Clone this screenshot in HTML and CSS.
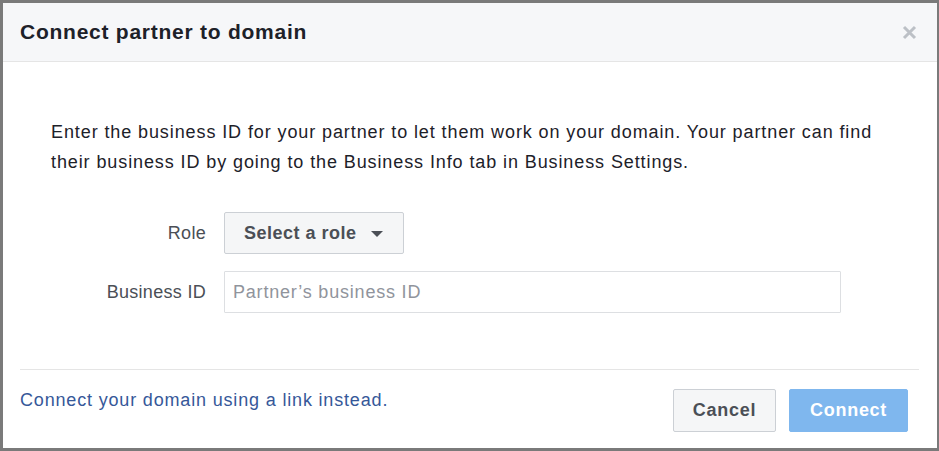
FILE: index.html
```html
<!DOCTYPE html>
<html lang="en">
<head>
<meta charset="utf-8">
<title>Connect partner to domain</title>
<link rel="stylesheet" href="styles.css">
</head>
<body>
<div class="dialog">
  <header class="dlg-header">
    <h1 class="title">Connect partner to domain</h1>
    <button class="close" type="button" aria-label="Close">
      <svg width="15" height="15" viewBox="0 0 15 15"><path d="M2 2 L13 13 M13 2 L2 13" stroke="#bcc0c6" stroke-width="3" stroke-linecap="butt" fill="none"/></svg>
    </button>
  </header>
  <div class="dlg-body">
    <p class="intro">Enter the business ID for your partner to let them work on your domain. Your partner can find their business ID by going to the Business Info tab in Business Settings.</p>
    <div class="form">
      <label class="label">Role</label>
      <button class="select" type="button"><span>Select a role</span><svg class="caret" width="12" height="6" viewBox="0 0 12 6"><path d="M0 0 H12 L6 6 Z" fill="#4b4f56"/></svg></button>
      <label class="label">Business ID</label>
      <input class="input" type="text" placeholder="Partner’s business ID">
    </div>
  </div>
  <footer class="dlg-footer">
    <a class="link" href="#">Connect your domain using a link instead.</a>
    <div class="actions">
      <button class="btn btn-cancel" type="button">Cancel</button>
      <button class="btn btn-connect" type="button">Connect</button>
    </div>
  </footer>
</div>
</body>
</html>
```
FILE: styles.css
```css
html, body {
  margin: 0;
  padding: 0;
  background: #ffffff;
}
body {
  font-family: "Liberation Sans", Arial, Helvetica, sans-serif;
  color: #1d2129;
}
.dialog {
  box-sizing: border-box;
  width: 939px;
  height: 451px;
  border: 3px solid #7a7a7a;
  border-right-width: 2px;
  background: #ffffff;
  display: flex;
  flex-direction: column;
}
.dlg-header {
  height: 58px;
  background: #f6f7f9;
  border-bottom: 1px solid #e5e5e5;
  display: flex;
  align-items: center;
  justify-content: space-between;
  padding: 0 20px 0 17px;
}
.title {
  margin: 0;
  font-size: 21px;
  font-weight: bold;
  letter-spacing: 0.75px;
  color: #1d2129;
  line-height: 24px;
}
.close {
  border: 0;
  background: none;
  padding: 0;
  width: 15px;
  height: 15px;
  display: block;
  margin-top: 1px;
}
.close svg { display: block; }
.dlg-body {
  padding: 55px 36px 56px 48px;
}
.intro {
  margin: 0;
  font-size: 18px;
  line-height: 30px;
  letter-spacing: 0.9px;
  color: #1d2129;
}
.form {
  margin-top: 35px;
  display: grid;
  grid-template-columns: 155px auto;
  column-gap: 18px;
  row-gap: 17px;
  align-items: center;
  justify-items: start;
}
.label {
  justify-self: end;
  font-size: 18px;
  letter-spacing: 0.3px;
  color: #4b4f56;
}
.select {
  box-sizing: border-box;
  height: 42px;
  display: inline-flex;
  align-items: center;
  gap: 14px;
  padding: 0 20px 0 19px;
  background: #f5f6f7;
  border: 1px solid #ccd0d5;
  border-radius: 2px;
  font-family: inherit;
  font-size: 18px;
  font-weight: bold;
  letter-spacing: 0.5px;
  color: #4b4f56;
}
.caret { display: block; margin-top: 1px; }
.input {
  box-sizing: border-box;
  width: 617px;
  height: 42px;
  border: 1px solid #dddfe2;
  border-radius: 1px;
  padding: 0 8px;
  font-family: inherit;
  font-size: 18px;
  letter-spacing: 0.8px;
  color: #1d2129;
  outline: none;
}
.input::placeholder {
  color: #90949c;
}
.dlg-footer {
  margin: 0 18px 0 17px;
  border-top: 1px solid #e5e5e5;
  padding: 19px 11px 16px 0;
  display: flex;
  justify-content: space-between;
  align-items: flex-start;
}
.link {
  font-size: 18px;
  line-height: 23px;
  letter-spacing: 0.83px;
  color: #365899;
  text-decoration: none;
}
.actions {
  display: flex;
  gap: 13px;
}
.btn {
  box-sizing: border-box;
  height: 43px;
  border-radius: 2px;
  font-family: inherit;
  font-size: 18px;
  font-weight: bold;
  letter-spacing: 0.7px;
}
.btn-cancel {
  padding: 0 19px;
  background: #f5f6f7;
  border: 1px solid #ccd0d5;
  color: #4b4f56;
}
.btn-connect {
  padding: 0 20px;
  background: #7fb7ee;
  border: 1px solid #7fb7ee;
  color: #ffffff;
}
```
